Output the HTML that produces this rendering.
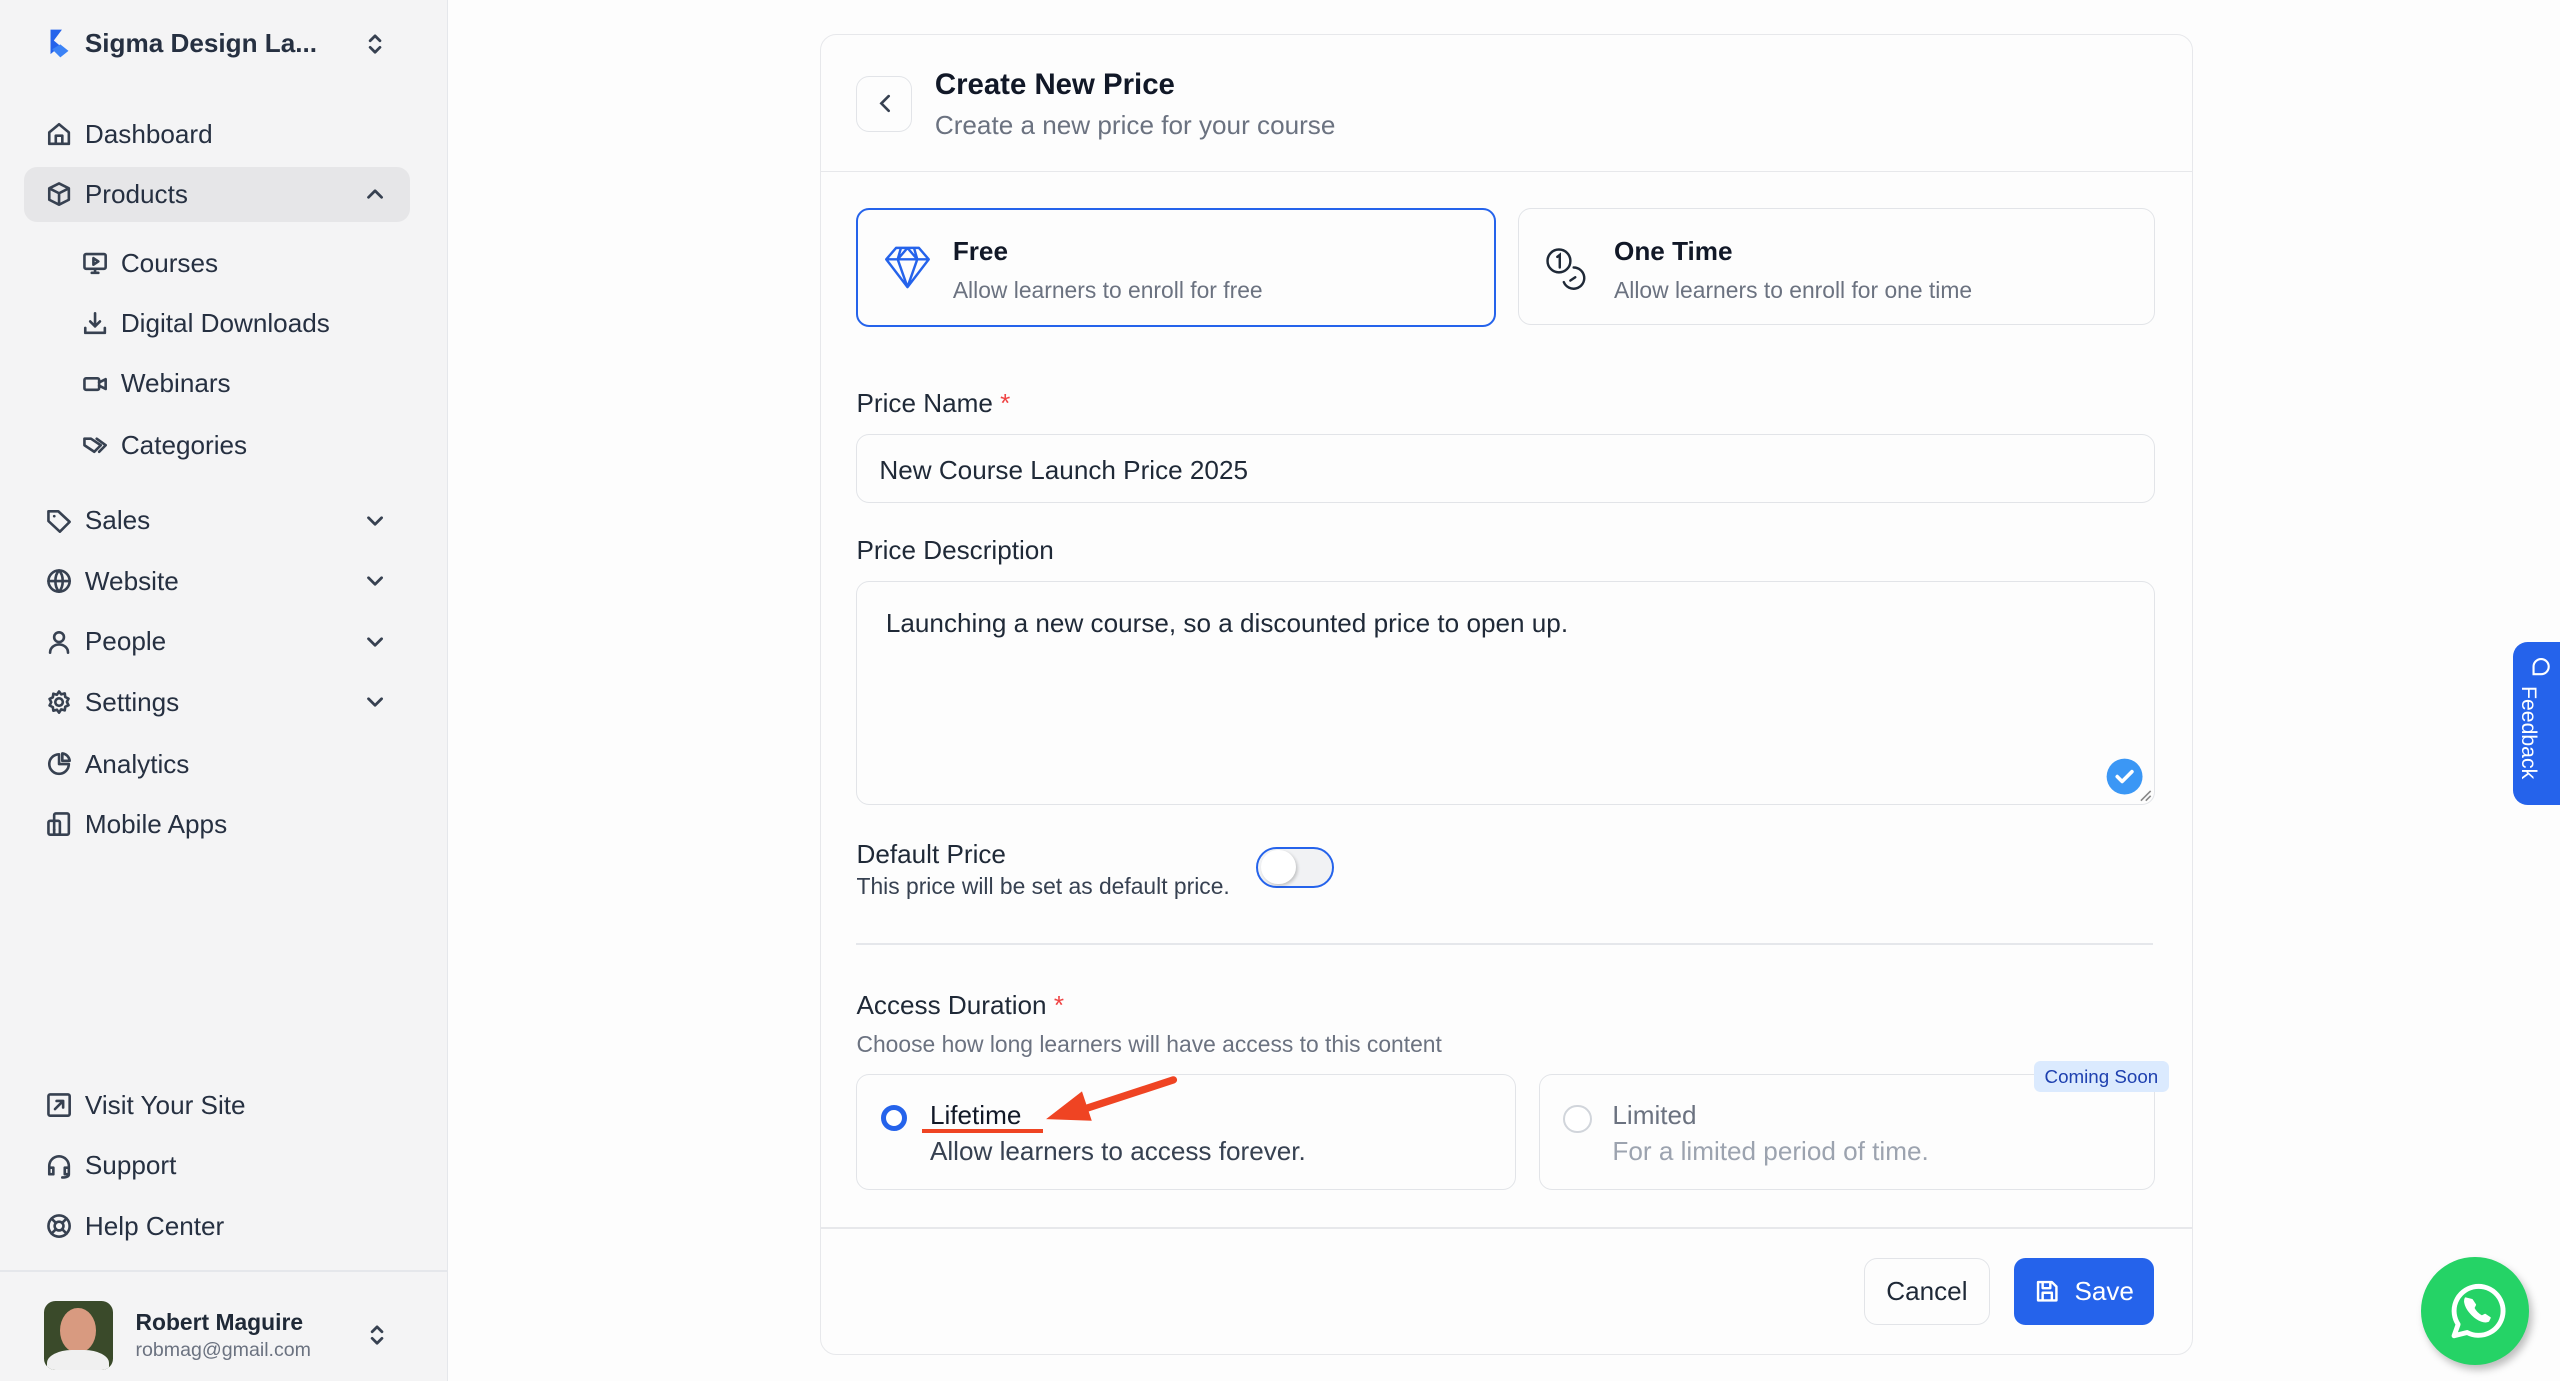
<!DOCTYPE html>
<html><head><meta charset="utf-8"><style>
html,body{margin:0;padding:0;}
html{width:2560px;height:1381px;overflow:hidden;background:#fdfdfd;}
#r{zoom:1.63265;width:1568px;height:846px;position:relative;font-family:"Liberation Sans",sans-serif;color:#1f2937;overflow:hidden;background:#fdfdfd;}
.a{position:absolute;white-space:nowrap;}
.sb{position:absolute;left:0;top:0;width:274px;height:846px;background:#f4f4f5;border-right:1px solid #e5e7eb;}
.ni{position:absolute;font-size:16px;color:#263041;line-height:20px;}
.ic{position:absolute;width:16px;height:16px;fill:none;stroke:#374151;stroke-width:1.6;stroke-linecap:round;stroke-linejoin:round;}
.chev{position:absolute;left:222px;width:16px;height:16px;fill:none;stroke:#374151;stroke-width:1.7;stroke-linecap:round;stroke-linejoin:round;}
.card{position:absolute;left:502px;top:21px;width:840px;height:808px;border:1px solid #e7e8eb;border-radius:10px;background:#fdfdfd;}
.box{position:absolute;border:1px solid #e2e4e8;border-radius:8px;background:#fdfdfd;}
.lbl{font-size:16px;color:#1f2937;}
.gray{color:#6b7280;}
</style></head><body><div id="r">
<div class="sb">
 <svg class="a" style="left:27px;top:17px" width="18" height="20" viewBox="0 0 18 20"><path d="M4 1 L11 1 L5 9 L4 6Z" fill="#2563eb"/><path d="M4 6 L10 11 L4 16Z" fill="#2563eb"/><path d="M5 13 L10 10 L15 14 L10 18Z" fill="#3b82f6"/></svg>
 <div class="a" style="left:52px;top:17px;font-size:16px;font-weight:bold;color:#263041">Sigma Design La...</div>
 <svg class="chev" style="top:19px" viewBox="0 0 16 16"><path d="M5 6l3-3 3 3M5 10l3 3 3-3"/></svg>

 <svg class="ic" style="left:28px;top:74px" viewBox="0 0 16 16"><path d="M2 14V7l6-5 6 5v7H2zM6 14V9h4v5"/></svg>
 <div class="ni" style="left:52px;top:72px">Dashboard</div>
 <div class="a" style="left:15px;top:102px;width:236px;height:34px;background:#e6e6e8;border-radius:8px"></div>
 <svg class="ic" style="left:28px;top:111px" viewBox="0 0 16 16"><path d="M8 1.5l6 3v7l-6 3-6-3v-7zM2 4.5l6 3 6-3M8 7.5v7"/></svg>
 <div class="ni" style="left:52px;top:109px">Products</div>
 <svg class="chev" style="top:111px" viewBox="0 0 16 16"><path d="M4 10l4-4 4 4"/></svg>

 <svg class="ic" style="left:50px;top:153px" viewBox="0 0 16 16"><rect x="1.5" y="2.5" width="13" height="9" rx="1"/><path d="M6 14h4M8 11.5V14M7 5v4l3-2z"/></svg>
 <div class="ni" style="left:74px;top:151px">Courses</div>
 <svg class="ic" style="left:50px;top:190px" viewBox="0 0 16 16"><path d="M8 2v8M5 7l3 3 3-3M2 11v3h12v-3"/></svg>
 <div class="ni" style="left:74px;top:188px">Digital Downloads</div>
 <svg class="ic" style="left:50px;top:227px" viewBox="0 0 16 16"><rect x="1.5" y="4.5" width="9" height="7" rx="1"/><path d="M10.5 7l4-2v6l-4-2"/></svg>
 <div class="ni" style="left:74px;top:225px">Webinars</div>
 <svg class="ic" style="left:50px;top:265px" viewBox="0 0 16 16"><path d="M1.5 6V3.5h4l6 4-4 4-6-4zM9 3.5l5.5 4-4 4"/></svg>
 <div class="ni" style="left:74px;top:263px">Categories</div>

 <svg class="ic" style="left:28px;top:311px" viewBox="0 0 16 16"><path d="M1.5 2v6l7 6.5 6-6-7-6.5zM5 5h.1"/></svg>
 <div class="ni" style="left:52px;top:309px">Sales</div>
 <svg class="chev" style="top:311px" viewBox="0 0 16 16"><path d="M4 6l4 4 4-4"/></svg>
 <svg class="ic" style="left:28px;top:348px" viewBox="0 0 16 16"><circle cx="8" cy="8" r="6.5"/><path d="M1.5 8h13M8 1.5c-3 3-3 10 0 13M8 1.5c3 3 3 10 0 13"/></svg>
 <div class="ni" style="left:52px;top:346px">Website</div>
 <svg class="chev" style="top:348px" viewBox="0 0 16 16"><path d="M4 6l4 4 4-4"/></svg>
 <svg class="ic" style="left:28px;top:385px" viewBox="0 0 16 16"><circle cx="8" cy="5" r="3"/><path d="M2.5 14.5c0-3 2.5-5 5.5-5s5.5 2 5.5 5"/></svg>
 <div class="ni" style="left:52px;top:383px">People</div>
 <svg class="chev" style="top:385px" viewBox="0 0 16 16"><path d="M4 6l4 4 4-4"/></svg>
 <svg class="ic" style="left:28px;top:422px" viewBox="0 0 16 16"><circle cx="8" cy="8" r="2.3"/><path d="M8 1.5l1.3 1.8 2.2-.6.3 2.2 2 1-1 2 1 2-2 1-.3 2.2-2.2-.6L8 14.5l-1.3-1.8-2.2.6-.3-2.2-2-1 1-2-1-2 2-1 .3-2.2 2.2.6z"/></svg>
 <div class="ni" style="left:52px;top:420px">Settings</div>
 <svg class="chev" style="top:422px" viewBox="0 0 16 16"><path d="M4 6l4 4 4-4"/></svg>
 <svg class="ic" style="left:28px;top:460px" viewBox="0 0 16 16"><path d="M8 2a6 6 0 1 0 6 6H8z"/><path d="M10 1.5a5 5 0 0 1 4.5 4.5H10z"/></svg>
 <div class="ni" style="left:52px;top:458px">Analytics</div>
 <svg class="ic" style="left:28px;top:497px" viewBox="0 0 16 16"><rect x="5" y="1.5" width="9" height="13" rx="1"/><rect x="1.5" y="6" width="7" height="8.5" rx="1"/><path d="M5 11.5h.1"/></svg>
 <div class="ni" style="left:52px;top:495px">Mobile Apps</div>

 <svg class="ic" style="left:28px;top:669px" viewBox="0 0 16 16"><rect x="1.5" y="1.5" width="13" height="13" rx="1"/><path d="M5.5 10.5l5-5M6.5 5.5h4v4"/></svg>
 <div class="ni" style="left:52px;top:667px">Visit Your Site</div>
 <svg class="ic" style="left:28px;top:706px" viewBox="0 0 16 16"><path d="M2 10V8a6 6 0 0 1 12 0v2M2 9h2.5v4H2zM11.5 9H14v4h-2.5zM14 13c0 1.5-2 2-4 2"/></svg>
 <div class="ni" style="left:52px;top:704px">Support</div>
 <svg class="ic" style="left:28px;top:743px" viewBox="0 0 16 16"><circle cx="8" cy="8" r="6.5"/><circle cx="8" cy="8" r="2.7"/><path d="M3.4 3.4l2.7 2.7M12.6 3.4L9.9 6.1M3.4 12.6l2.7-2.7M12.6 12.6L9.9 9.9"/></svg>
 <div class="ni" style="left:52px;top:741px">Help Center</div>
 <div class="a" style="left:0;top:778px;width:274px;height:1px;background:#e5e7eb"></div>
 <div class="a" style="left:27px;top:797px;width:42px;height:42px;border-radius:7px;overflow:hidden;background:#3a4a2a">
  <div class="a" style="left:10px;top:4px;width:22px;height:28px;border-radius:50%;background:#d89a80"></div>
  <div class="a" style="left:2px;top:30px;width:38px;height:20px;border-radius:40% 40% 0 0;background:#f0f0f0"></div>
 </div>
 <div class="a" style="left:83px;top:802px;font-size:14px;font-weight:bold;color:#1f2937">Robert Maguire</div>
 <div class="a" style="left:83px;top:820px;font-size:12px;color:#6b7280">robmag@gmail.com</div>
 <svg class="chev" style="top:810px;left:223px" viewBox="0 0 16 16"><path d="M5 6l3-3 3 3M5 10l3 3 3-3"/></svg>
</div>

<div class="card">
 <div class="box" style="left:22px;top:25px;width:33px;height:33px"></div>
 <svg class="a" style="left:33px;top:35px" width="14" height="14" viewBox="0 0 14 14" fill="none" stroke="#374151" stroke-width="1.6" stroke-linecap="round"><path d="M9 2.5L4.5 7 9 11.5"/></svg>
 <div class="a" style="left:70px;top:20px;font-size:18px;font-weight:bold;color:#111827">Create New Price</div>
 <div class="a gray" style="left:70px;top:46px;font-size:16px">Create a new price for your course</div>
 <div class="a" style="left:0;top:83px;width:840px;height:1px;background:#e7e8eb"></div>

 <div class="box" style="left:22px;top:106px;width:389px;height:70px;border:1.5px solid #2563eb"></div>
 <svg class="a" style="left:38px;top:127px" width="30" height="30" viewBox="0 0 30 30" fill="none" stroke="#2563eb" stroke-width="1.5" stroke-linejoin="round"><path d="M8 3h14l6 7-13 17L2 10zM2 10h26M11 3l-2 7 6 17 6-17-2-7M9 10L15 3l6 7"/></svg>
 <div class="a" style="left:81px;top:123px;font-size:16px;font-weight:bold;color:#111827">Free</div>
 <div class="a gray" style="left:81px;top:148px;font-size:14px">Allow learners to enroll for free</div>

 <div class="box" style="left:427px;top:106px;width:389px;height:70px"></div>
 <svg class="a" style="left:441px;top:127px" width="32" height="32" viewBox="0 0 32 32" fill="none" stroke="#1f2937" stroke-width="1.5" stroke-linecap="round"><circle cx="11" cy="11" r="7"/><path d="M10 8.5l1.5-1.2V15"/><path d="M20 15a6.5 6.5 0 1 1-6 9"/><path d="M18 23l3-2"/></svg>
 <div class="a" style="left:486px;top:123px;font-size:16px;font-weight:bold;color:#111827">One Time</div>
 <div class="a gray" style="left:486px;top:148px;font-size:14px">Allow learners to enroll for one time</div>

 <div class="a lbl" style="left:22px;top:216px">Price Name <span style="color:#ef4444">*</span></div>
 <div class="box" style="left:22px;top:244px;width:794px;height:41px"></div>
 <div class="a" style="left:36px;top:257px;font-size:16px;color:#1f2937">New Course Launch Price 2025</div>

 <div class="a lbl" style="left:22px;top:306px">Price Description</div>
 <div class="box" style="left:22px;top:334px;width:794px;height:136px"></div>
 <div class="a" style="left:40px;top:351px;font-size:16px;color:#1f2937">Launching a new course, so a discounted price to open up.</div>
 <svg class="a" style="left:787px;top:442px" width="24" height="24" viewBox="0 0 24 24"><circle cx="12" cy="12" r="11" fill="#3b97f5"/><path d="M7.5 12l3 3 6-6" fill="none" stroke="#fff" stroke-width="2.2" stroke-linecap="round" stroke-linejoin="round"/></svg>
 <svg class="a" style="left:806px;top:460px" width="10" height="10" viewBox="0 0 10 10" stroke="#888" stroke-width="1"><path d="M9 3L3 9M9 6L6 9"/></svg>

 <div class="a lbl" style="left:22px;top:492px">Default Price</div>
 <div class="a" style="left:22px;top:513px;font-size:14px;color:#374151">This price will be set as default price.</div>
 <div class="a" style="left:267px;top:497px;width:45px;height:23px;border:1.5px solid #2563eb;border-radius:13px;background:#f1f2f4"></div>
 <div class="a" style="left:270px;top:499px;width:21px;height:21px;border-radius:50%;background:#fff;box-shadow:1px 1px 2px rgba(0,0,0,.2)"></div>
 <div class="a" style="left:22px;top:556px;width:794px;height:1px;background:#e5e7eb"></div>

 <div class="a lbl" style="left:22px;top:585px">Access Duration <span style="color:#ef4444">*</span></div>
 <div class="a gray" style="left:22px;top:610px;font-size:14px">Choose how long learners will have access to this content</div>

 <div class="box" style="left:22px;top:636px;width:403px;height:70px"></div>
 <div class="a" style="left:37px;top:655px;width:10px;height:10px;border:3.5px solid #2563eb;border-radius:50%;background:#fff"></div>
 <div class="a" style="left:67px;top:652px;font-size:16px;color:#111827">Lifetime</div>
 <div class="a" style="left:62px;top:670px;width:74px;height:2.5px;background:#ef4423"></div>
 <svg class="a" style="left:130px;top:637px" width="90" height="32" viewBox="0 0 90 32"><path d="M86 3L28 22" stroke="#ef4423" stroke-width="4.5" stroke-linecap="round"/><path d="M8 27L30 10 36 28z" fill="#ef4423"/></svg>
 <div class="a" style="left:67px;top:674px;font-size:16px;color:#374151">Allow learners to access forever.</div>

 <div class="box" style="left:440px;top:636px;width:376px;height:70px"></div>
 <div class="a" style="left:455px;top:655px;width:15px;height:15px;border:1.5px solid #d1d5db;border-radius:50%;background:#fff"></div>
 <div class="a" style="left:485px;top:652px;font-size:16px;color:#6b7280">Limited</div>
 <div class="a" style="left:485px;top:674px;font-size:16px;color:#9ca3af">For a limited period of time.</div>
 <div class="a" style="left:743px;top:628px;width:83px;height:19px;background:#dbeafe;border-radius:4px;font-size:11.5px;color:#1e40af;text-align:center;line-height:19px">Coming Soon</div>

 <div class="a" style="left:0;top:730px;width:840px;height:1px;background:#e7e8eb"></div>
 <div class="box" style="left:639px;top:749px;width:76px;height:40px;font-size:16px;color:#1f2937;text-align:center;line-height:40px">Cancel</div>
 <div class="a" style="left:731px;top:749px;width:86px;height:41px;background:#2563eb;border-radius:7px;font-size:16px;color:#fff;line-height:41px">
  <svg style="position:absolute;left:13px;top:13px" width="15" height="15" viewBox="0 0 16 16" fill="none" stroke="#fff" stroke-width="1.6" stroke-linejoin="round"><path d="M2 2h9l3 3v9H2zM5 2v4h5V2M5 14v-5h6v5"/></svg>
  <span style="position:absolute;left:37px">Save</span></div>
</div>

<div class="a" style="left:1539px;top:393px;width:40px;height:100px;background:#2563eb;border-radius:9px"></div>
<svg class="a" style="left:1549px;top:402px" width="13" height="13" viewBox="0 0 14 14" fill="none" stroke="#fff" stroke-width="1.4"><path d="M3 12V7a5 5 0 1 1 5 5z"/></svg>
<div class="a" style="left:1556px;top:420px;transform:rotate(90deg);transform-origin:0 0;font-size:13px;color:#fff">Feedback</div>

<div class="a" style="left:1483px;top:770px;width:66px;height:66px;border-radius:50%;background:#25d366;box-shadow:2px 3px 5px rgba(0,0,0,.25)"></div>
<svg class="a" style="left:1495px;top:782px" width="42" height="42" viewBox="0 0 42 42" fill="none" stroke="#fff" stroke-width="3" stroke-linejoin="round"><path d="M8 36l2.5-7A15 15 0 1 1 16 34z"/><path d="M15 13c-1 2 0 6 4 10s8 5 10 4l1-2-3-2-2 1c-2-1-4-3-5-5l1-2-2-3z" fill="#fff" stroke-width="1"/></svg>
</div></body></html>
